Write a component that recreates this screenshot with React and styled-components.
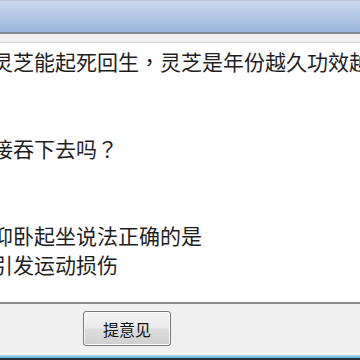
import styled, { createGlobalStyle } from "styled-components";

const GlobalStyle = createGlobalStyle`
  html, body {
    margin: 0;
    padding: 0;
    background: #ffffff;
    overflow: hidden;
  }
`;

const Window = styled.div({
  width: "360px",
  height: "360px",
  display: "flex",
  flexDirection: "column",
  overflow: "hidden",
  fontFamily: '"Noto Sans CJK SC", "Noto Sans", sans-serif',
});

const TitleBar = styled.div({
  height: "31px",
  flexShrink: 0,
  borderTop: "1px solid #b9c4d2",
  background: "linear-gradient(to bottom, #cbd9ec 0%, #b3c8e4 50%, #9bb5da 100%)",
  borderBottom: "2px solid #7f8790",
});

const ToolStrip = styled.div({
  height: "8px",
  flexShrink: 0,
  background: "#f0f0f0",
  borderBottom: "1px solid #d4d4d4",
});

const Content = styled.div({
  flex: 1,
  marginLeft: "-8px",
  paddingTop: "4px",
  overflow: "hidden",
  color: "#1e1e1e",
  fontSize: "21px",
});

const Para = styled.p({
  margin: "0 0 58px 0",
  lineHeight: "29px",
  whiteSpace: "nowrap",
});

// centered full-width punctuation, as in the reference
const Punct = styled.span({
  fontFamily: '"Noto Sans CJK TC", sans-serif',
});

const Footer = styled.div({
  height: "49px",
  flexShrink: 0,
  background: "#f0f0f0",
  borderTop: "2px solid #8c8c8c",
  display: "flex",
  alignItems: "center",
  paddingLeft: "83px",
});

const Button = styled.button({
  width: "88px",
  height: "35px",
  borderRadius: "3px",
  border: "1px solid #7a7a7a",
  background: "linear-gradient(to bottom, #f3f3f3 0%, #ebebeb 48%, #dddddd 52%, #cfcfcf 100%)",
  boxShadow: "inset 0 0 0 1px #fbfbfb",
  fontFamily: '"Noto Sans CJK SC", sans-serif',
  fontSize: "16px",
  color: "#111",
  padding: 0,
});

const BottomEdge = styled.div({
  height: "7px",
  flexShrink: 0,
  background:
    "linear-gradient(to bottom, #f7f7f7 0px, #f7f7f7 2px, #a9dcf2 2px, #56b4e0 5px, #2b2f36 5px)",
});

export default function App() {
  return (
    <Window>
      <GlobalStyle />
      <TitleBar />
      <ToolStrip />
      <Content>
        <Para>
          灵芝能起死回生<Punct>，</Punct>灵芝是年份越久功效越好
        </Para>
        <Para>
          接吞下去吗<Punct>？</Punct>
        </Para>
        <Para>
          仰卧起坐说法正确的是
          <br />
          引发运动损伤
        </Para>
      </Content>
      <Footer>
        <Button>提意见</Button>
      </Footer>
      <BottomEdge />
    </Window>
  );
}
